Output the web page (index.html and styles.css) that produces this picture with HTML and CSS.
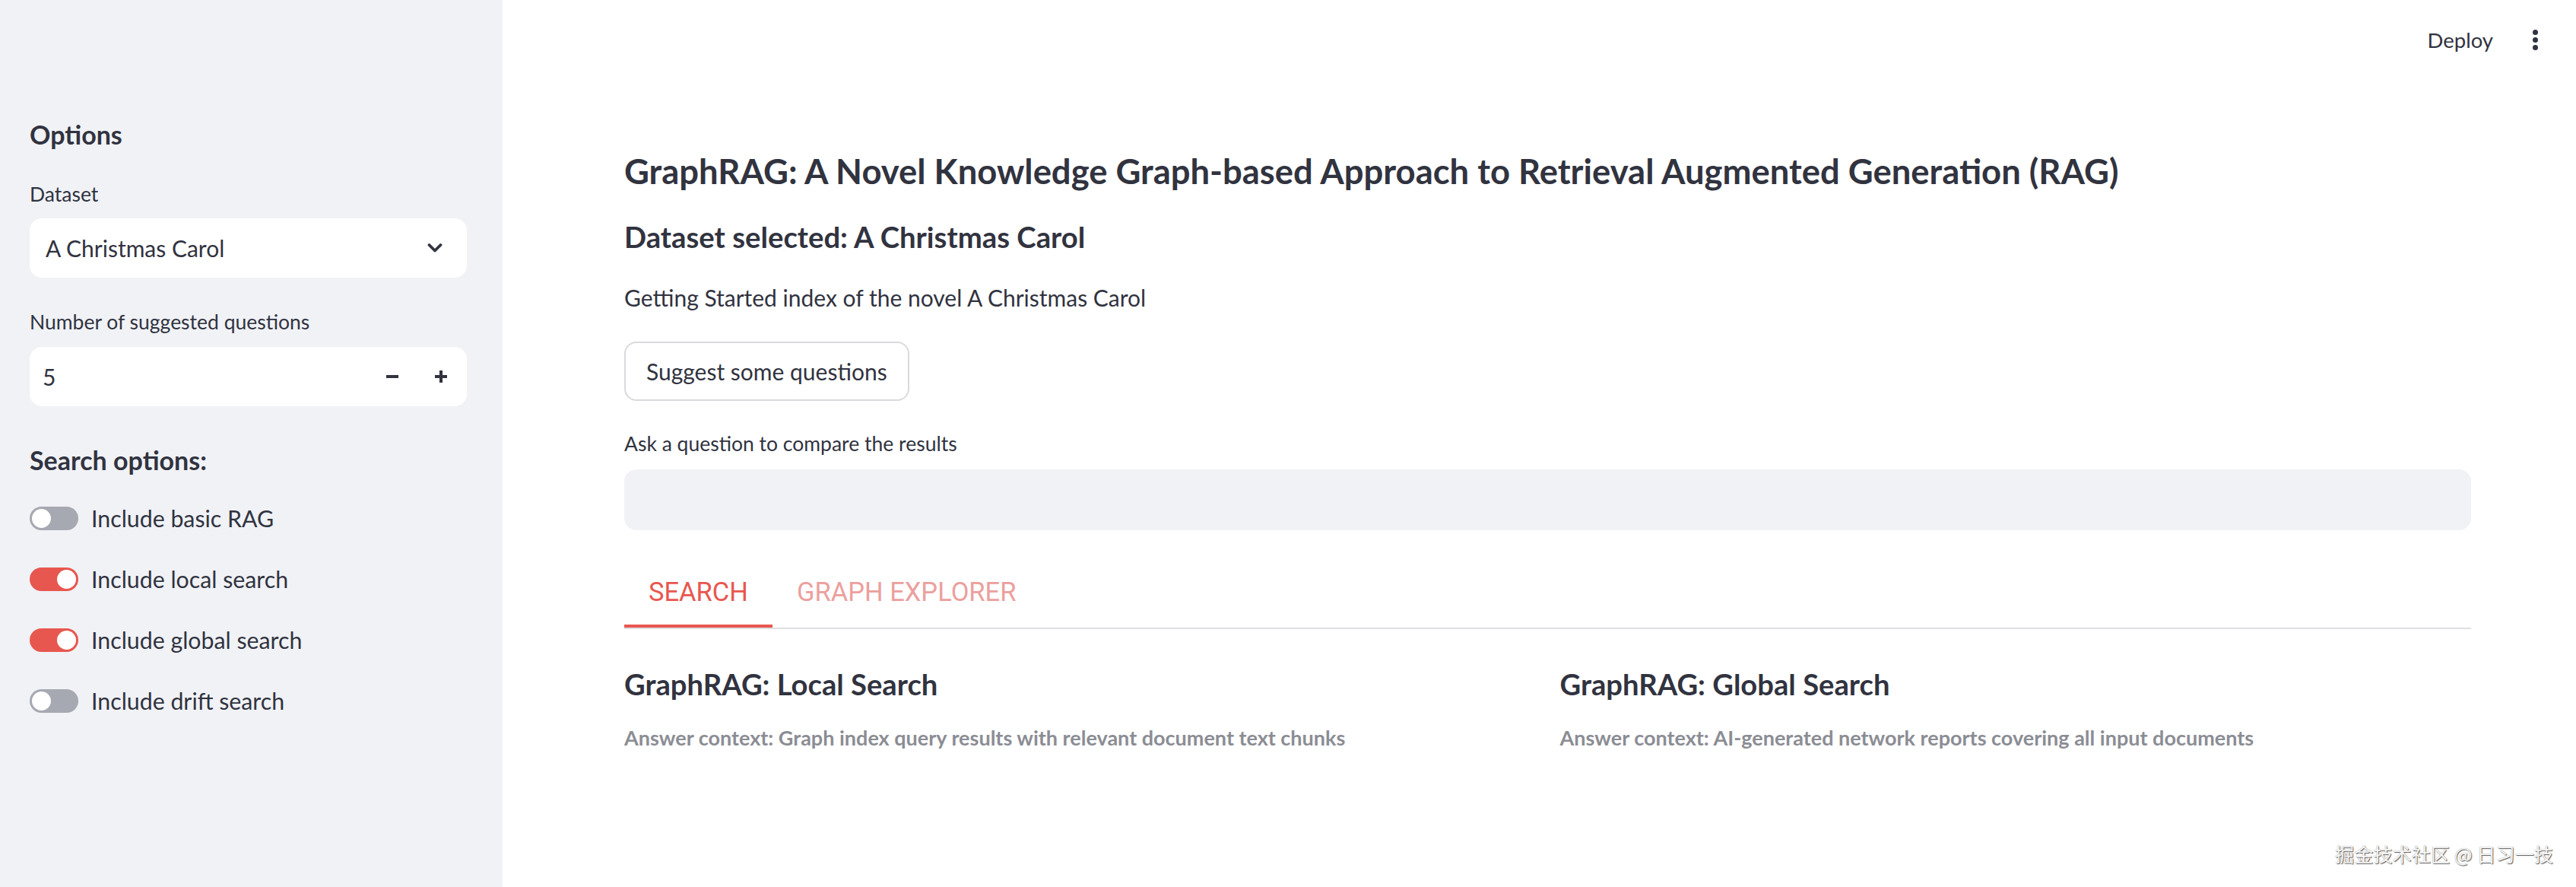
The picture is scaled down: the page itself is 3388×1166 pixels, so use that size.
FILE: index.html
```html
<!DOCTYPE html>
<html lang="en">
<head>
    <meta charset="UTF-8">
    <title>GraphRAG</title>
    <link rel="stylesheet" href="styles.css">
</head>
<body>
    <div class="app">
        <aside class="sidebar">
            <h2 class="side-heading">Options</h2>

            <label class="widget-label label-dataset">Dataset</label>
            <div class="select-box">
                <span>A Christmas Carol</span>
                <svg class="chevron" width="20" height="14" viewBox="0 0 20 14">
                    <path d="M2.5 3 L10 10.5 L17.5 3" fill="none" stroke="#31333f" stroke-width="3.8" stroke-linecap="round" stroke-linejoin="round"/>
                </svg>
            </div>

            <label class="widget-label label-number">Number of suggested questions</label>
            <div class="number-box">
                <span class="number-value">5</span>
                <div class="stepper">
                    <span class="step-btn step-minus"></span>
                    <span class="step-btn step-plus"></span>
                </div>
            </div>

            <h2 class="side-heading search-heading">Search options:</h2>

            <div class="toggle-list">
                <div class="toggle-row">
                    <span class="toggle"></span>
                    <span class="toggle-label">Include basic RAG</span>
                </div>
                <div class="toggle-row">
                    <span class="toggle on"></span>
                    <span class="toggle-label">Include local search</span>
                </div>
                <div class="toggle-row">
                    <span class="toggle on"></span>
                    <span class="toggle-label">Include global search</span>
                </div>
                <div class="toggle-row">
                    <span class="toggle"></span>
                    <span class="toggle-label">Include drift search</span>
                </div>
            </div>
        </aside>

        <main class="main">
            <header class="topbar">
                <span class="deploy">Deploy</span>
                <span class="kebab"><i></i><i></i><i></i></span>
            </header>

            <section class="content">
                <h1 class="page-title">GraphRAG: A Novel Knowledge Graph-based Approach to Retrieval Augmented Generation (RAG)</h1>
                <h3 class="sub-title">Dataset selected: A Christmas Carol</h3>
                <p class="intro">Getting Started index of the novel A Christmas Carol</p>

                <button class="suggest-btn">Suggest some questions</button>

                <label class="widget-label label-question">Ask a question to compare the results</label>
                <div class="question-input"></div>

                <nav class="tabs">
                    <span class="tab active">SEARCH</span>
                    <span class="tab">GRAPH EXPLORER</span>
                </nav>

                <div class="results">
                    <div class="result-col">
                        <h3 class="result-title">GraphRAG: Local Search</h3>
                        <p class="result-caption">Answer context: Graph index query results with relevant document text chunks</p>
                    </div>
                    <div class="result-col">
                        <h3 class="result-title">GraphRAG: Global Search</h3>
                        <p class="result-caption">Answer context: AI-generated network reports covering all input documents</p>
                    </div>
                </div>
            </section>
        </main>
    </div>

    <div class="watermark">掘金技术社区 @ 日习一技</div>
</body>
</html>
```

FILE: styles.css
```css
:root {
    --text-color: #31333f;
    --sidebar-bg: #f0f2f6;
    --accent: #e8574f;
    --accent-soft: #eba09e;
    --muted: #8b8d94;
}

* {
    margin: 0;
    padding: 0;
    box-sizing: border-box;
}

html, body {
    height: 100%;
}

body {
    font-family: "Lato", "Source Sans Pro", "Liberation Sans", sans-serif;
    color: var(--text-color);
    background: #ffffff;
    overflow: hidden;
}

.app {
    display: flex;
    height: 1166px;
}

/* sidebar */

.sidebar {
    width: 661px;
    flex-shrink: 0;
    background-color: var(--sidebar-bg);
    padding: 152px 47px 0 39px;
    display: flex;
    flex-direction: column;
}

.side-heading {
    font-size: 34px;
    font-weight: 700;
    line-height: 50px;
}

.widget-label {
    display: block;
    font-size: 26.5px;
    line-height: 36px;
}

.label-dataset {
    margin-top: 35px;
}

.select-box,
.number-box {
    height: 78px;
    background: #ffffff;
    border-radius: 16px;
    display: flex;
    align-items: center;
    font-size: 30px;
}

.select-box {
    margin-top: 14px;
    padding: 0 32px 0 21px;
    justify-content: space-between;
}

.label-number {
    margin-top: 40px;
}

.number-box {
    margin-top: 15px;
    padding: 0 26px 0 17px;
    justify-content: space-between;
}

.stepper {
    display: flex;
    gap: 48px;
}

.step-btn {
    position: relative;
    width: 16px;
    height: 16px;
}

.step-btn::before,
.step-btn::after {
    content: "";
    position: absolute;
    background: var(--text-color);
}

.step-btn::before {
    left: 0;
    top: 6px;
    width: 16px;
    height: 4px;
}

.step-plus::after {
    left: 6px;
    top: 0;
    width: 4px;
    height: 16px;
}

.search-heading {
    margin-top: 46px;
}

.toggle-list {
    margin-top: 31px;
    display: flex;
    flex-direction: column;
    gap: 40px;
}

.toggle-row {
    display: flex;
    align-items: center;
    height: 40px;
    gap: 17px;
}

.toggle {
    position: relative;
    width: 64px;
    height: 31px;
    border-radius: 16px;
    background: #a6a9b2;
}

.toggle::after {
    content: "";
    position: absolute;
    left: 3px;
    top: 3px;
    width: 25px;
    height: 25px;
    border-radius: 50%;
    background: #ffffff;
}

.toggle.on {
    background: var(--accent);
}

.toggle.on::after {
    left: 36px;
}

.toggle-label {
    font-size: 30.3px;
}

/* main */

.main {
    flex: 1;
    display: flex;
    flex-direction: column;
}

.topbar {
    height: 104px;
    display: flex;
    justify-content: flex-end;
    align-items: center;
    padding-right: 50px;
    gap: 52px;
}

.deploy {
    font-size: 27.5px;
}

.kebab {
    display: flex;
    flex-direction: column;
    gap: 3px;
}

.kebab i {
    width: 7px;
    height: 7px;
    border-radius: 50%;
    background: var(--text-color);
}

.content {
    padding: 89px 138px 0 160px;
    display: flex;
    flex-direction: column;
    align-items: flex-start;
}

.page-title {
    font-size: 45.4px;
    font-weight: 700;
    line-height: 64px;
}

.sub-title {
    margin-top: 29px;
    font-size: 38.3px;
    font-weight: 700;
    line-height: 50px;
}

.intro {
    margin-top: 33px;
    font-size: 30px;
    line-height: 44px;
}

.suggest-btn {
    margin-top: 36px;
    height: 78px;
    padding: 0 27px;
    background: #ffffff;
    border: 2px solid #d9dade;
    border-radius: 16px;
    font-family: inherit;
    font-size: 30px;
    color: var(--text-color);
}

.label-question {
    margin-top: 38px;
}

.question-input {
    margin-top: 16px;
    width: 100%;
    height: 80px;
    background: var(--sidebar-bg);
    border-radius: 16px;
}

.tabs {
    margin-top: 61px;
    width: 100%;
    display: flex;
    border-bottom: 2px solid #dedfe2;
}

.tab {
    font-family: "Roboto", sans-serif;
    font-size: 34.5px;
    line-height: 40px;
    padding: 0 32px 23px;
    border-bottom: 4px solid transparent;
    color: var(--accent-soft);
}

.tab.active {
    color: var(--accent);
    border-bottom-color: var(--accent);
}

.results {
    margin-top: 47px;
    width: 100%;
    display: grid;
    grid-template-columns: 1fr 1fr;
    gap: 32px;
}

.result-title {
    font-size: 38.2px;
    font-weight: 700;
    line-height: 50px;
}

.result-caption {
    margin-top: 28px;
    font-size: 27px;
    font-weight: 700;
    line-height: 36px;
    color: var(--muted);
}

.watermark {
    position: absolute;
    right: 30px;
    bottom: 26px;
    font-family: "Noto Sans CJK SC", sans-serif;
    font-size: 25.2px;
    color: #f6f6f6;
    text-shadow: 1px 1px 1px #5f5f5f, 0 0 1px #8a8a8a;
}
```
